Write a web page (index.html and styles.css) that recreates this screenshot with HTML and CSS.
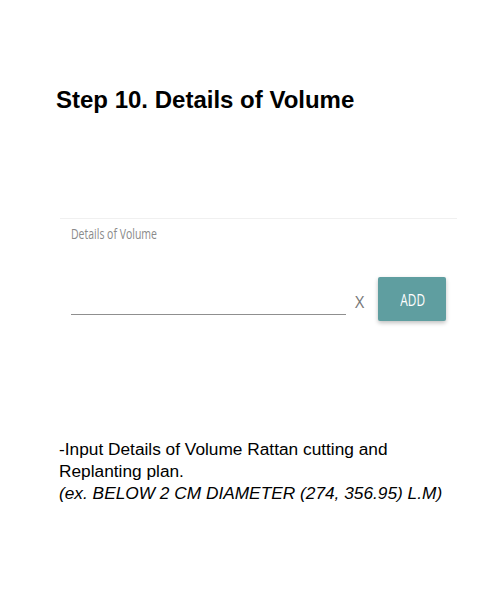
FILE: index.html
```html
<!DOCTYPE html>
<html>
<head>
<meta charset="utf-8">
<link rel="stylesheet" href="styles.css">
</head>
<body>
<div class="page">
  <h1 class="title">Step 10. Details of Volume</h1>
  <div class="card">
    <div class="label"><span>Details of Volume</span></div>
    <div class="row">
      <div class="field"></div>
      <span class="clear">X</span>
      <button class="add"><span>ADD</span></button>
    </div>
  </div>
  <div class="note">
    <p>-Input Details of Volume Rattan cutting and Replanting plan.</p>
    <p class="ex">(ex. BELOW 2 CM DIAMETER (274, 356.95) L.M)</p>
  </div>
</div>
</body>
</html>
```

FILE: styles.css
```css
html, body {
  margin: 0;
  padding: 0;
  background: #fff;
}
.page {
  width: 500px;
  height: 600px;
  box-sizing: border-box;
  padding-top: 86px;
}
.title {
  margin: 0 0 0 56px;
  font-family: "Liberation Sans", Arial, sans-serif;
  font-weight: bold;
  font-size: 24px;
  line-height: 28px;
  color: #000;
}
.card {
  margin: 104px 43px 0 60px;
  border-top: 1px solid #f0f0f0;
  padding: 5px 10px 0 11px;
}
.label {
  font-family: "Open Sans", sans-serif;
  font-size: 15px;
  line-height: 18px;
  color: #8a8a8a;
}
.label span {
  display: inline-block;
  transform: scaleX(0.7);
  transform-origin: left center;
}
.row {
  display: flex;
  align-items: flex-end;
  height: 44px;
  margin-top: 35px;
}
.field {
  width: 275px;
  height: 0;
  border-bottom: 1px solid #8f8f8f;
  margin-bottom: 6px;
}
.clear {
  font-family: "Open Sans", sans-serif;
  font-size: 16px;
  line-height: 20px;
  color: #777;
  margin: 0 14px 9px 9px;
}
.add {
  width: 68px;
  height: 44px;
  border: none;
  border-radius: 2px;
  background: #5f9ea0;
  color: #fff;
  font-family: "Open Sans", sans-serif;
  font-size: 16px;
  line-height: 20px;
  box-shadow: 0 2px 4px rgba(0,0,0,0.25);
  padding: 2px 0 0;
  align-self: flex-start;
}
.add span {
  display: inline-block;
  transform: scaleX(0.74);
}
.note {
  margin: 117px 0 0 59px;
  font-family: "Liberation Sans", Arial, sans-serif;
  font-size: 17.3px;
  line-height: 22px;
  color: #000;
  width: 395px;
}
.note p {
  margin: 0;
}
.ex {
  font-style: italic;
}
```
